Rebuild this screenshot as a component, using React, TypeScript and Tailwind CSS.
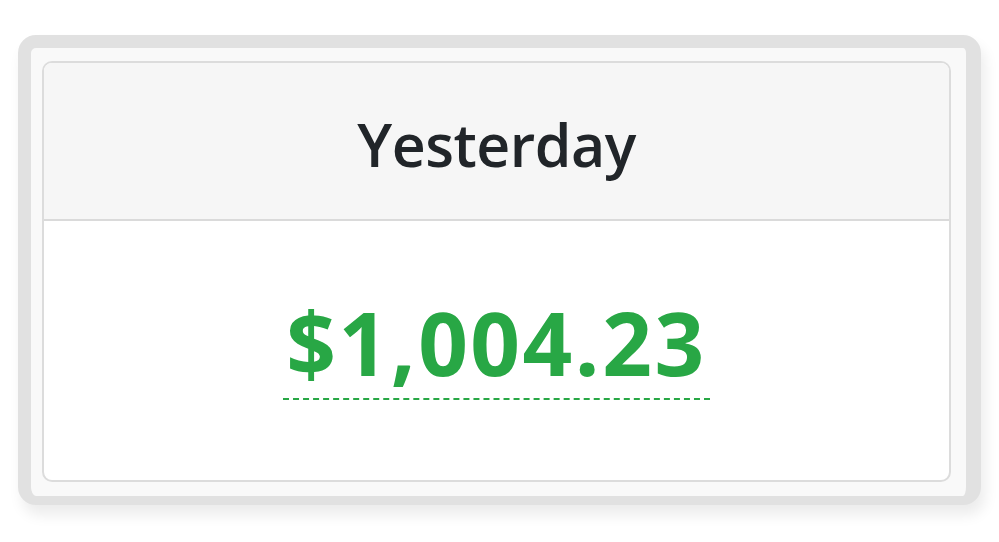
import React from "react";

export default function App() {
  return (
    <div className="h-[542px] w-[999px] bg-white pl-[18px] pt-[35px] font-['Open_Sans',sans-serif]">
      {/* Frame */}
      <div className="h-[470px] w-[963px] rounded-[18px] border-[#e1e1e1] border-t-[13px] border-r-[15px] border-b-[9px] border-l-[13px] bg-[#f9f9f9] pt-[13px] pr-[15px] pb-[14px] pl-[11px] shadow-[4px_10px_14px_rgba(0,0,0,0.08)]">
        {/* Card */}
        <div className="flex h-full flex-col overflow-hidden rounded-[10px] border-2 border-[#dcdcdc] bg-white">
          <div className="flex h-[158px] items-center justify-center border-b-2 border-[#dadada] bg-[#f6f6f6] pt-[6px]">
            <h2 className="text-[59px] font-semibold leading-none tracking-[-0.5px] text-[#212529]">Yesterday</h2>
          </div>
          <div className="flex grow items-center justify-center pb-[2px]">
            <span className="border-b-2 border-dashed border-[#28a745] px-[3px] pb-[12px] text-[87px] font-bold leading-none tracking-[2.5px] text-[#28a745]">
              $1,004.23
            </span>
          </div>
        </div>
      </div>
    </div>
  );
}
